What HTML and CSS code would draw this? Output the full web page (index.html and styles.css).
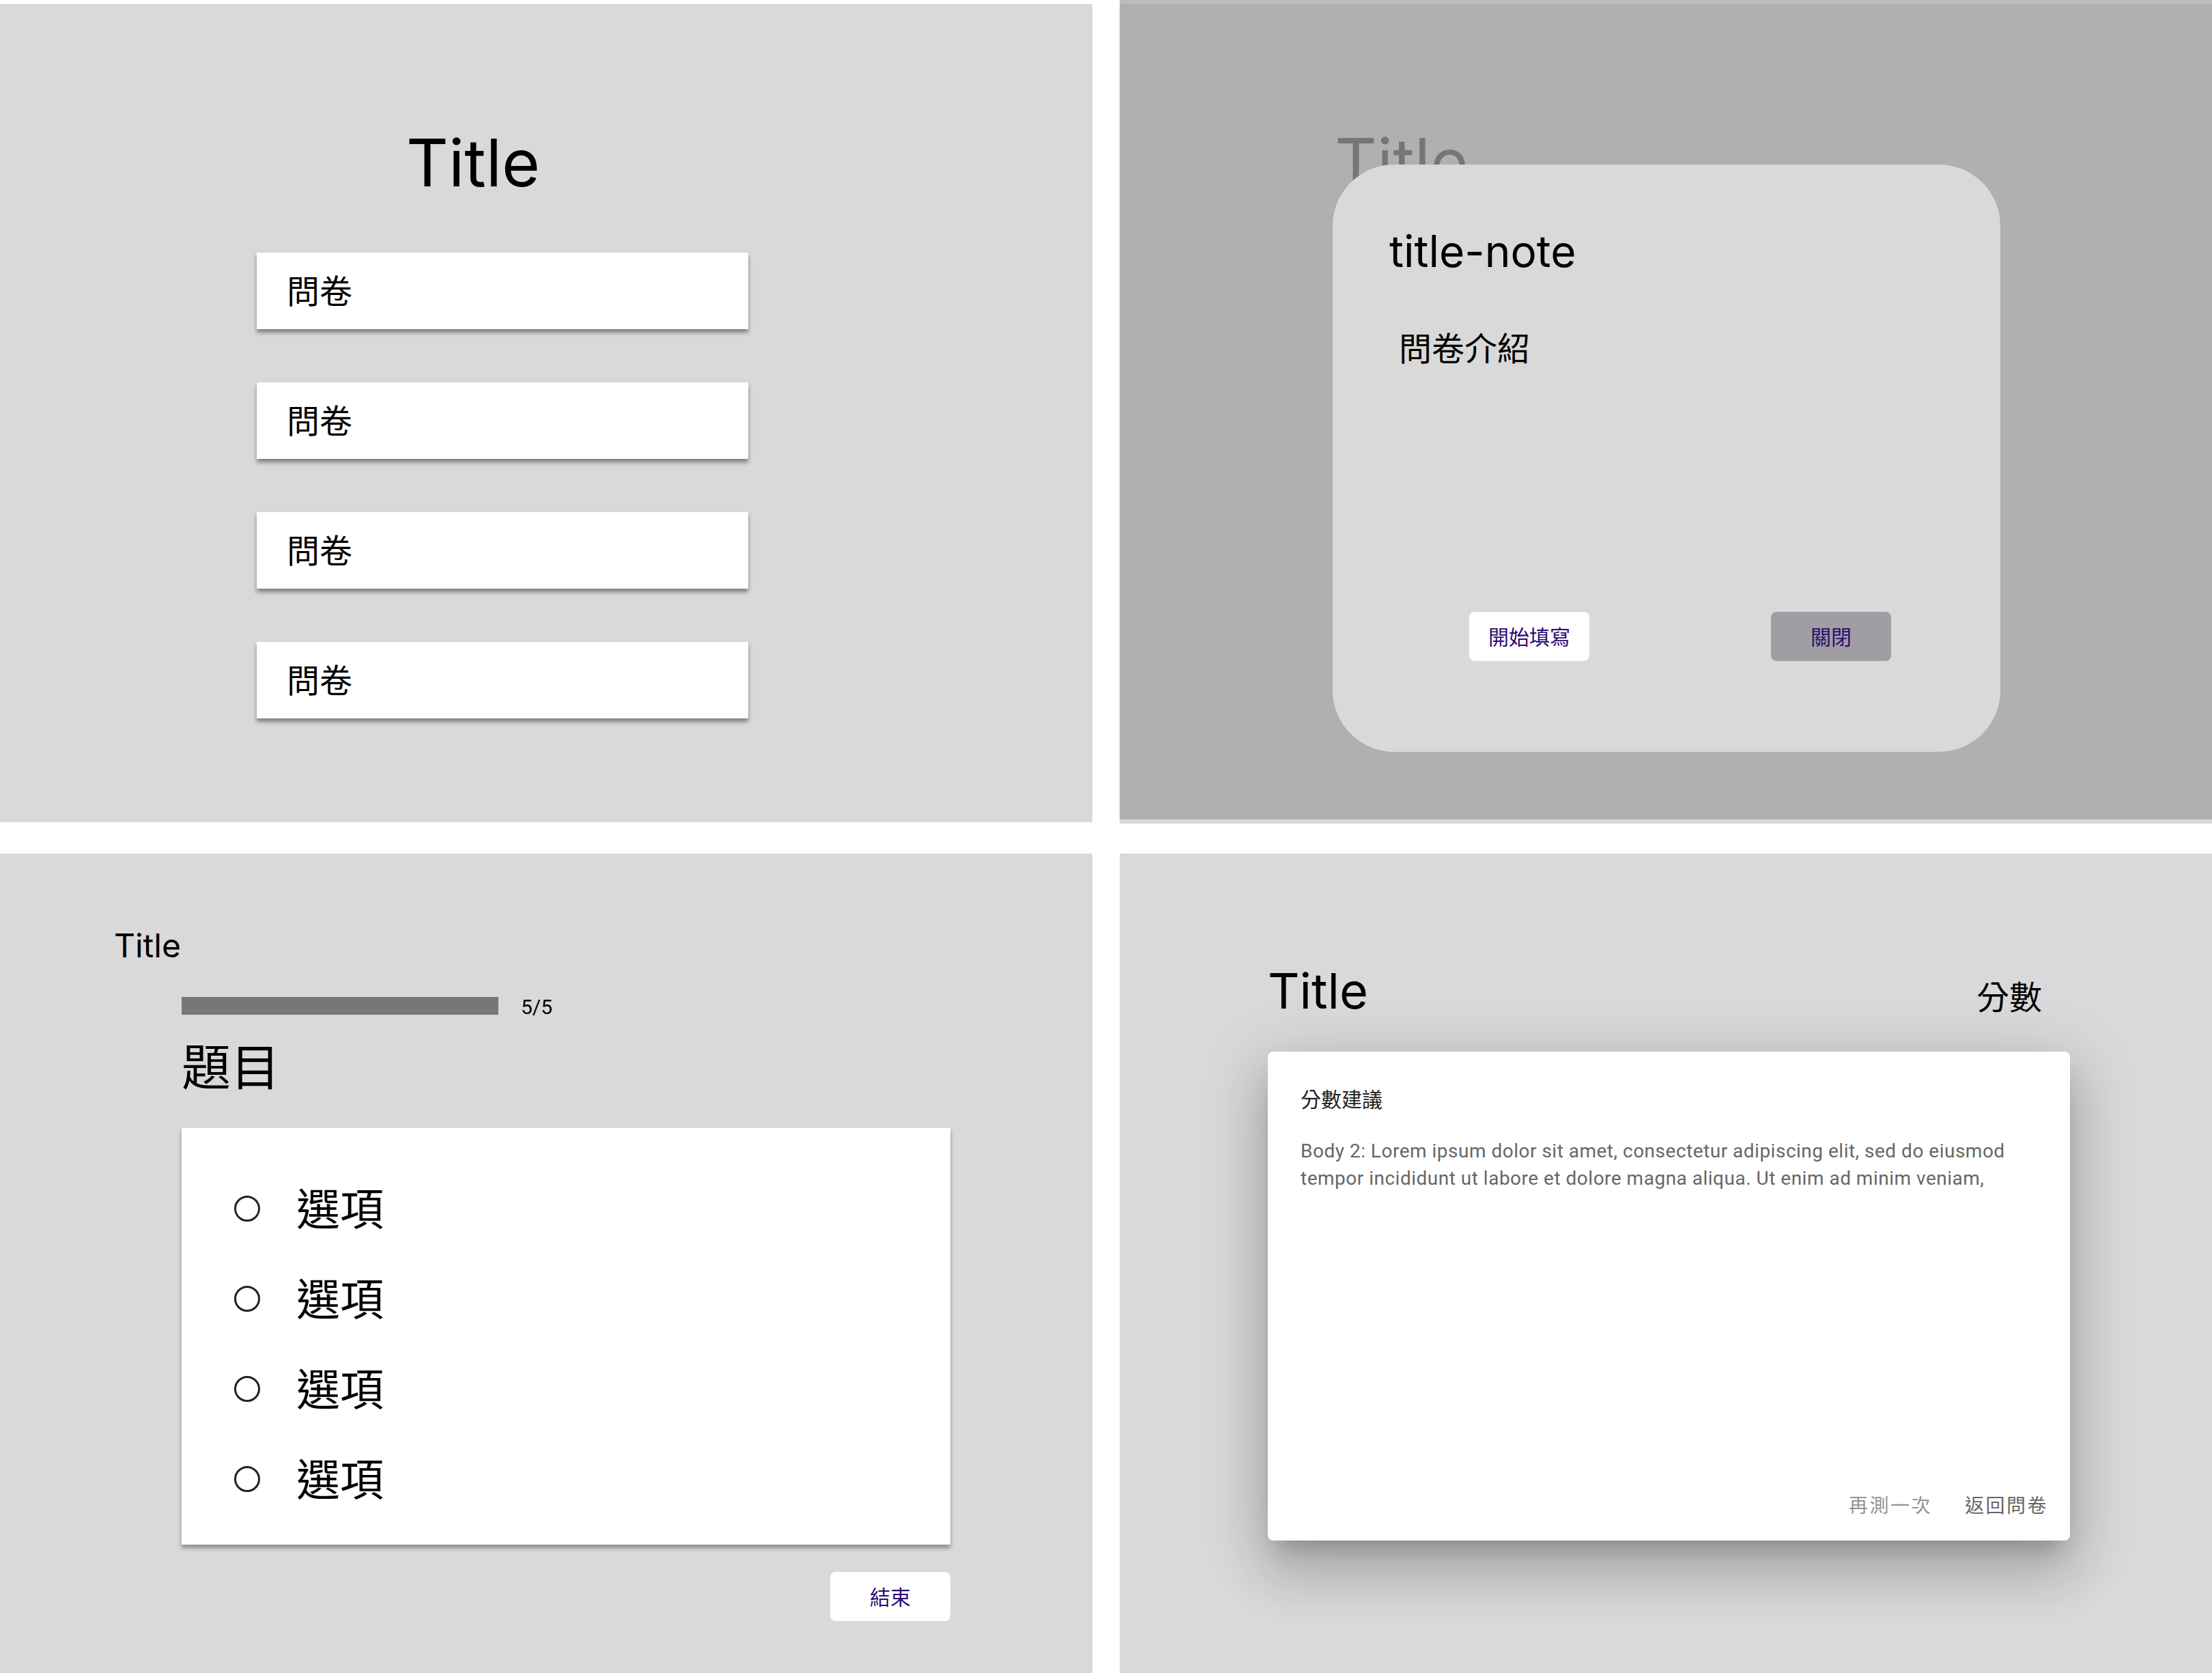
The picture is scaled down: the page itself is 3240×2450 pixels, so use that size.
FILE: index.html
```html
<!DOCTYPE html>
<html lang="zh-Hant">
<head>
<meta charset="utf-8">
<title>問卷 App</title>
<link rel="stylesheet" href="styles.css">
</head>
<body>
<div class="board">

  <section class="screen list-screen">
    <h1 class="list-title">Title</h1>
    <div class="survey-list">
      <div class="survey-card">問卷</div>
      <div class="survey-card">問卷</div>
      <div class="survey-card">問卷</div>
      <div class="survey-card">問卷</div>
    </div>
  </section>

  <section class="screen intro-screen">
    <h1 class="ghost-title">Title</h1>
    <div class="dialog">
      <h2 class="dialog-title">title-note</h2>
      <p class="dialog-desc">問卷介紹</p>
      <div class="dialog-actions">
        <button class="btn">開始填寫</button>
        <button class="btn btn-muted">關閉</button>
      </div>
    </div>
  </section>

  <section class="screen quiz-screen">
    <h1 class="quiz-title">Title</h1>
    <div class="quiz-body">
      <div class="progress">
        <div class="progress-bar"></div>
        <span class="progress-count">5/5</span>
      </div>
      <h2 class="question">題目</h2>
      <div class="options-card">
        <div class="option"><span class="radio"></span><span class="option-label">選項</span></div>
        <div class="option"><span class="radio"></span><span class="option-label">選項</span></div>
        <div class="option"><span class="radio"></span><span class="option-label">選項</span></div>
        <div class="option"><span class="radio"></span><span class="option-label">選項</span></div>
      </div>
      <div class="quiz-footer">
        <button class="btn">結束</button>
      </div>
    </div>
  </section>

  <section class="screen result-screen">
    <div class="result-header">
      <h1 class="result-title">Title</h1>
      <span class="score">分數</span>
    </div>
    <div class="result-card">
      <h3 class="result-heading">分數建議</h3>
      <p class="result-text">Body 2: Lorem ipsum dolor sit amet, consectetur adipiscing elit, sed do eiusmod tempor incididunt ut labore et dolore magna aliqua. Ut enim ad minim veniam,</p>
      <div class="result-actions">
        <button class="text-btn text-btn-muted">再測一次</button>
        <button class="text-btn">返回問卷</button>
      </div>
    </div>
  </section>

</div>
</body>
</html>
```

FILE: styles.css
```css
* { box-sizing: border-box; }

html, body {
  margin: 0;
  padding: 0;
  background: #ffffff;
}

body {
  width: 3240px;
  height: 2450px;
  overflow: hidden;
  font-family: "Noto Sans CJK TC", "Noto Sans", sans-serif;
  color: #000;
}

h1, h2, h3, p { margin: 0; font-weight: 400; }

button {
  border: 0;
  padding: 0;
  margin: 0;
  font: inherit;
  cursor: pointer;
}

.board {
  display: grid;
  grid-template-columns: 1600px 1600px;
  grid-template-rows: 1206px 1200px;
  column-gap: 40px;
  row-gap: 44px;
}

.screen {
  background: #d9d9d9;
}

/* ---------- screen 1 : list ---------- */
.list-screen {
  margin-top: 6px;
  height: 1198px;
  padding-top: 184px;
  display: flex;
  flex-direction: column;
}

.list-title {
  font-family: Inter, "Noto Sans CJK TC", sans-serif;
  font-size: 96px;
  line-height: 1;
  margin-left: 595px;
  margin-bottom: 84px;
}

.survey-list {
  display: flex;
  flex-direction: column;
  gap: 78px;
  margin-left: 376px;
}

.survey-card {
  width: 720px;
  height: 112px;
  background: #ffffff;
  box-shadow: 0 5px 6px rgba(0, 0, 0, 0.42);
  display: flex;
  align-items: center;
  padding-left: 44px;
  padding-bottom: 6px;
  font-size: 48px;
  line-height: 1;
}

/* ---------- screen 2 : intro dialog ---------- */
.intro-screen {
  position: relative;
  height: 1206px;
  background: linear-gradient(to bottom, #bcbcbc 0, #bcbcbc 6px, #b0b0b0 6px, #b0b0b0 1200px, #d9d9d9 1200px);
  padding-top: 189px;
  padding-left: 315px;
}

.ghost-title {
  font-family: Inter, "Noto Sans CJK TC", sans-serif;
  font-size: 96px;
  line-height: 1;
  color: #767676;
}

.dialog {
  position: absolute;
  left: 312px;
  top: 241px;
  width: 978px;
  height: 860px;
  border-radius: 90px;
  background: #d9d9d9;
  padding-top: 95px;
}

.dialog-title {
  font-family: Inter, "Noto Sans CJK TC", sans-serif;
  font-size: 64px;
  line-height: 1;
  margin-left: 83px;
}

.dialog-desc {
  font-size: 48px;
  line-height: 1;
  margin-left: 97px;
  margin-top: 83px;
}

.dialog-actions {
  display: flex;
  gap: 266px;
  padding-left: 200px;
  margin-top: 365px;
}

.btn {
  width: 176px;
  height: 72px;
  border-radius: 8px;
  background: #ffffff;
  color: #2c0b74;
  font-family: "Noto Sans CJK TC", sans-serif;
  font-size: 30px;
  line-height: 1;
  display: flex;
  align-items: center;
  justify-content: center;
  padding-bottom: 3px;
}

.btn-muted {
  background: #9f9ea3;
}

/* ---------- screen 3 : quiz ---------- */
.quiz-screen {
  padding-top: 111px;
}

.quiz-title {
  font-family: Inter, "Noto Sans CJK TC", sans-serif;
  font-size: 48px;
  line-height: 1;
  margin-left: 167px;
}

.quiz-body {
  margin-left: 266px;
  width: 1126px;
}

.progress {
  display: flex;
  align-items: center;
  margin-top: 47px;
}

.progress-bar {
  width: 464px;
  height: 26px;
  background: #7a7675;
}

.progress-count {
  font-family: Roboto, sans-serif;
  font-size: 30px;
  line-height: 1;
  margin-left: 33px;
  margin-top: 4px;
}

.question {
  font-size: 72px;
  line-height: 1;
  margin-top: 32px;
}

.options-card {
  margin-top: 58px;
  height: 610px;
  background: #ffffff;
  box-shadow: 0 5px 6px rgba(0, 0, 0, 0.35);
  padding-top: 52px;
}

.option {
  height: 132px;
  display: flex;
  align-items: center;
}

.radio {
  width: 38px;
  height: 38px;
  margin-left: 77px;
  border: 3px solid #222222;
  border-radius: 50%;
  flex: none;
}

.option-label {
  font-size: 64px;
  line-height: 1;
  margin-left: 53px;
  margin-bottom: 8px;
}

.quiz-footer {
  display: flex;
  justify-content: flex-end;
  margin-top: 40px;
}

/* ---------- screen 4 : result ---------- */
.result-screen {
  padding-top: 165px;
  padding-left: 217px;
}

.result-header {
  width: 1175px;
  display: flex;
  justify-content: space-between;
  align-items: flex-start;
}

.result-title {
  font-family: Inter, "Noto Sans CJK TC", sans-serif;
  font-size: 72px;
  line-height: 1;
}

.score {
  font-size: 48px;
  line-height: 1;
  margin-top: 18px;
  margin-right: 41px;
}

.result-card {
  margin-top: 53px;
  width: 1175px;
  height: 716px;
  background: #ffffff;
  border-radius: 8px;
  box-shadow:
    0 22px 30px -14px rgba(0, 0, 0, 0.2),
    0 48px 76px 6px rgba(0, 0, 0, 0.14),
    0 18px 92px 16px rgba(0, 0, 0, 0.12);
  display: flex;
  flex-direction: column;
  padding-bottom: 16px;
}

.result-heading {
  font-size: 30px;
  line-height: 1;
  color: #212121;
  margin: 53px 48px 0;
}

.result-text {
  font-family: Roboto, sans-serif;
  font-size: 28px;
  line-height: 40px;
  letter-spacing: 0.5px;
  color: #666666;
  margin: 43px 48px 0;
}

.result-actions {
  margin-top: auto;
  display: flex;
  justify-content: flex-end;
  gap: 16px;
  padding-right: 16px;
}

.text-btn {
  height: 72px;
  padding: 0 16px 3px;
  background: transparent;
  font-family: "Noto Sans CJK TC", sans-serif;
  font-size: 28px;
  letter-spacing: 2.5px;
  line-height: 1;
  color: #666666;
  display: flex;
  align-items: center;
}

.text-btn-muted {
  color: #939393;
}
```
